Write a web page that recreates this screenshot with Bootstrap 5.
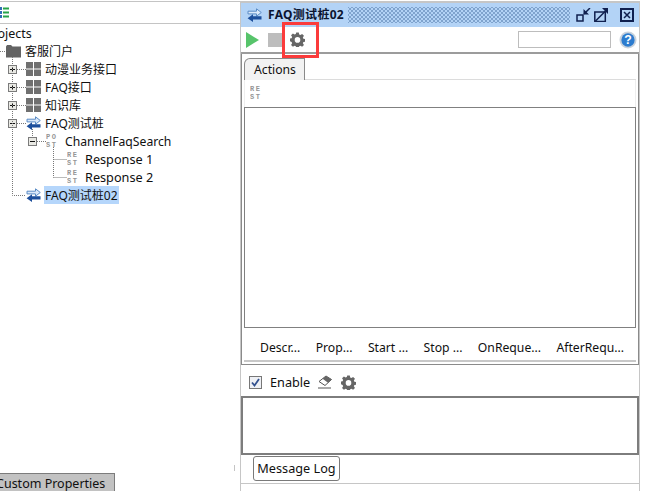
<!DOCTYPE html>
<html lang="zh">
<head>
<meta charset="utf-8">
<title>FAQ测试桩02</title>
<link href="https://cdn.jsdelivr.net/npm/bootstrap@5.3.0/dist/css/bootstrap.min.css" rel="stylesheet">
<style>
html,body{height:491px;overflow:hidden;background:#fff}
body{font-family:"Noto Sans","Noto Sans CJK SC",sans-serif;font-size:12.5px;line-height:18px;color:#101010;position:relative}
.shell{height:491px;width:654px}
.leftpane{width:240px;flex:none;height:491px;overflow:hidden;position:relative}
.lefttool{margin-top:1px;border-top:1px solid #c4c4c4;border-bottom:1px solid #c4c4c4;box-sizing:content-box;height:21px}
.projects{margin-left:-15px;height:18px;line-height:20px}
.treerow{height:18px;white-space:nowrap;font-size:12px}
.treerow>span:last-child{height:18px;line-height:20px}
.treerow.latinrow{font-size:12.7px}
.treerow.latinrow>span:last-child{line-height:18px}
.channelrow{font-size:12.2px}
.channeltext{margin-left:2px}
.lv0{padding-left:6px}.lv1{padding-left:8px}.lv2{padding-left:28px}.lv3{padding-left:67px}.lvlast{padding-left:26px}
.exp{width:9px;height:9px;flex:none;margin-right:9px}
.ico{width:15px;height:14px;flex:none;margin-right:4px}
.tinyrest{width:13px;height:16px;flex:none;margin-right:5px;font:bold 7px/7.5px "Liberation Mono",monospace;letter-spacing:1.500px;color:#969696;display:block;padding-top:1px;white-space:nowrap;overflow:hidden}
.hilite{background:#b5d6fb;padding:0 1px;margin-left:-1px}
.treelines{position:absolute;left:0;top:24px;width:240px;height:190px;pointer-events:none}
.bottomtab{height:18px;width:123px;margin-left:-8px;background:#c2c2c2;border:1px solid #7c7c7c;border-bottom:0;padding-left:3px;line-height:19px;white-space:nowrap}
.tick{width:1px;height:6px;background:#c4c4c4;margin-right:5px;margin-bottom:20px}
.rightpane{width:400px;flex:none;height:490px;border-left:1px solid #c6c6c6;border-right:1px solid #c6c6c6;border-top:2px solid #c6c6c6;margin-top:1px}
.titlebar{height:24px;background:#b3d3f6;padding:0 5px 0 6px}
.titletext{font-weight:700;font-size:12px;color:#0b1430;margin-left:6px;letter-spacing:.3px;white-space:nowrap}
.dither{flex:1;height:16px;margin:0 6px 0 4px;background-image:radial-gradient(#7fa3cd 0.8px,transparent 1px),radial-gradient(#7fa3cd 0.8px,transparent 1px);background-size:4px 4px;background-position:0 0,2px 2px}
.toolrow{border-bottom:2px solid #9c9c9c;padding:0 1px 0 5px;box-sizing:content-box;height:25px}
.stopbox{width:15px;height:14px;background:#bdbdbd;margin-left:9px;margin-right:7px;flex:none}
.searchbox{width:93px;height:17px;border:1px solid #bdbdbd;background:#fff;margin-right:8px}
.helpicon{margin-right:1px}
.tabsarea{height:311px;border:1px solid #8a8a8a;border-top:0;padding:0 2px}
.acttabs{border-bottom:1px solid #dcdcdc;height:26px;padding-top:4px}
.acttabs .nav-link{background:#f2f2f2;border:1px solid #8a8a8a;border-bottom:0;border-radius:6px 0 0 0;color:#101010;padding:0 9px;height:22px;line-height:21px;font-size:12.2px;width:61px}
.reststrip{height:27px;padding:5px 0 0 5px;border-left:1px solid #eee;border-right:1px solid #eee}
.reststrip .tinyrest{margin:0}
.bigbox{height:221px;border:1px solid #808080;background:#fff}
.evtabs{height:34px;border-bottom:2px solid #c8c8c8;padding:8px 12px 0 16px;font-size:12.2px;white-space:nowrap}
.enablerow{height:31px;padding:3px 0 0 8px;font-size:12.7px}
.fakecheck{width:13px;height:13px;border:1px solid #777;background:#eef0f5;flex:none;margin-right:8px}
.logbox{height:59px;border:2px solid #7d7d7d;background:#fff}
.logbtnrow{padding:1px 0 0 12px;border-bottom:1px solid #c6c6c6;box-sizing:content-box;height:27px}
.logbtn{font-size:12.7px;line-height:18px;padding:1px 3px 3px;border:1px solid #7a7a7a;border-radius:3px;color:#101010;background:#fff;height:25px;width:87px;white-space:nowrap;font-family:inherit}
.redmark{position:absolute;left:282px;top:22px;width:37px;height:36px;border:3px solid #fb3b3b;pointer-events:none}
</style>
</head>
<body>
<svg width="0" height="0" class="position-absolute">
  <symbol id="s-folder" viewBox="0 0 15 14"><path d="M0 2.500 1 1h4l1.500 1.500H15V13.500H0z" fill="#636363"/></symbol>
  <symbol id="s-grid" viewBox="0 0 15 14"><path d="M0 0h7v6.500H0zM8 0h7v6.500H8zM0 7.500h7V14H0zM8 7.500h7V14H8z" fill="#707070"/></symbol>
  <symbol id="s-swap" viewBox="0 0 15 14">
    <path d="M1 3.200h8.500V.8L14.300 4.500 9.500 8.200V5.900H1z" fill="#dbe9fa" stroke="#5b8cc6" stroke-width="1"/>
    <path d="M14.500 8.200H6V6.300L.6 10.200 6 14v-2.500h8.500z" fill="#1d4f9c"/>
  </symbol>
  <symbol id="s-plus" viewBox="0 0 9 9"><rect x=".5" y=".5" width="8" height="8" fill="#e9e9e4" stroke="#7b7b7b"/><path d="M2 4.500h5M4.500 2v5" stroke="#111"/></symbol>
  <symbol id="s-minus" viewBox="0 0 9 9"><rect x=".5" y=".5" width="8" height="8" fill="#e9e9e4" stroke="#7b7b7b"/><path d="M2 4.500h5" stroke="#111"/></symbol>
  <symbol id="s-gear" viewBox="0 0 16 16"><path fill="#666" fill-rule="evenodd" d="M6.600.5h2.800l.4 2.100 1.300.6 1.800-1.200 2 2-1.200 1.800.6 1.300 2.100.4v2.800l-2.100.4-.6 1.300 1.200 1.800-2 2-1.800-1.200-1.300.6-.4 2.100H6.600l-.4-2.100-1.300-.6-1.800 1.200-2-2 1.200-1.800-.6-1.300L-.400 9.800V7l2.100-.4.600-1.300L1.100 3.500l2-2 1.800 1.200 1.300-.6zM8 5.400a3 3 0 1 0 0 6 3 3 0 0 0 0-6z"/></symbol>
</svg>

<div class="shell d-flex">
  <div class="leftpane d-flex flex-column">
    <div class="lefttool d-flex align-items-center">
      <svg width="10" height="11" viewBox="0 0 10 11" class="flex-none">
        <path d="M0 0h2v3H0zM0 4h2v3H0zM0 8h2v3H0z" fill="#2f6db5"/>
        <path d="M3 .5h6v2H3zM3 4.500h6v2H3zM3 8.500h6v2H3z" fill="#27a34a"/>
      </svg>
    </div>
    <div class="projects">Projects</div>
    <ul class="list-unstyled m-0">
      <li class="treerow d-flex align-items-center lv0"><svg class="ico"><use href="#s-folder"/></svg><span>客服门户</span></li>
      <li class="treerow d-flex align-items-center lv1"><svg class="exp"><use href="#s-plus"/></svg><svg class="ico"><use href="#s-grid"/></svg><span>动漫业务接口</span></li>
      <li class="treerow d-flex align-items-center lv1"><svg class="exp"><use href="#s-plus"/></svg><svg class="ico"><use href="#s-grid"/></svg><span>FAQ接口</span></li>
      <li class="treerow d-flex align-items-center lv1"><svg class="exp"><use href="#s-plus"/></svg><svg class="ico"><use href="#s-grid"/></svg><span>知识库</span></li>
      <li class="treerow d-flex align-items-center lv1"><svg class="exp"><use href="#s-minus"/></svg><svg class="ico"><use href="#s-swap"/></svg><span>FAQ测试桩</span></li>
      <li class="treerow channelrow d-flex align-items-center lv2"><svg class="exp"><use href="#s-minus"/></svg><span class="tinyrest me-1">PO<br>ST</span><span class="channeltext">ChannelFaqSearch</span></li>
      <li class="treerow latinrow d-flex align-items-center lv3"><span class="tinyrest">RE<br>ST</span><span>Response 1</span></li>
      <li class="treerow latinrow d-flex align-items-center lv3"><span class="tinyrest">RE<br>ST</span><span>Response 2</span></li>
      <li class="treerow d-flex align-items-center lvlast"><svg class="ico"><use href="#s-swap"/></svg><span class="hilite">FAQ测试桩02</span></li>
    </ul>
    <svg class="treelines" viewBox="0 24 240 190">
      <path d="M0 51.500H6M12.500 57V195.500H26M17 69.500h9M17 87.500h9M17 105.500h9M17 123.500h9M32.500 129v8M37 141.500h9M53.500 147v30.500M53.500 159.500h13M53.500 177.500h13" fill="none" stroke="#777" stroke-dasharray="1 1"/>
    </svg>
    <div class="mt-auto d-flex justify-content-between align-items-end">
      <div class="bottomtab">Custom Properties</div>
      <div class="tick"></div>
    </div>
  </div>

  <div class="rightpane d-flex flex-column">
    <div class="titlebar d-flex align-items-center">
      <svg class="ico m-0"><use href="#s-swap"/></svg>
      <span class="titletext">FAQ测试桩02</span>
      <div class="dither"></div>
      <svg width="58" height="14" viewBox="0 0 58 14" class="flex-none">
        <g fill="none" stroke="#10204f" stroke-width="1.500">
          <rect x="1" y="7" width="6" height="6"/><path d="M8 6 14 0"/>
          <rect x="18.800" y="4" width="10.500" height="9.500"/><path d="M19 13.500 30 2.500"/>
          <rect x="45" y="1" width="12" height="12" stroke-width="2"/><path d="M48 4l6 6M54 4l-6 6"/>
        </g>
        <path d="M7.500 1v5.500H13zM26 0h6v6z" fill="#10204f"/>
      </svg>
    </div>
    <div class="toolrow d-flex align-items-center">
      <svg width="13" height="16" viewBox="0 0 13 16" class="flex-none"><path d="M0 0 13 8 0 16z" fill="#57c46b"/></svg>
      <div class="stopbox"></div>
      <svg width="15" height="15" class="flex-none me-auto"><use href="#s-gear"/></svg>
      <div class="searchbox"></div>
      <svg width="18" height="18" viewBox="0 0 19 19" class="flex-none helpicon">
        <circle cx="9.500" cy="9.500" r="9" fill="#c9d2dc"/><circle cx="9.500" cy="9.500" r="7" fill="#2c7ccf"/>
        <text x="9.500" y="14" text-anchor="middle" font-family="Liberation Sans" font-size="13" font-weight="700" fill="#fff">?</text>
      </svg>
    </div>
    <div class="tabsarea d-flex flex-column">
      <ul class="nav acttabs">
        <li class="nav-item"><a class="nav-link" href="#">Actions</a></li>
      </ul>
      <div class="reststrip"><span class="tinyrest">RE<br>ST</span></div>
      <div class="bigbox"></div>
      <div class="evtabs d-flex align-items-center justify-content-between">
        <span>Descr...</span><span>Prop...</span><span>Start ...</span><span>Stop ...</span><span>OnReque...</span><span>AfterRequ...</span>
      </div>
    </div>
    <div class="enablerow d-flex align-items-center">
      <span class="fakecheck d-flex align-items-center justify-content-center">
        <svg width="9" height="9" viewBox="0 0 9 9"><path d="M1 4.500 3.500 7.500 8 1" fill="none" stroke="#31508f" stroke-width="1.800"/></svg>
      </span>
      <span>Enable</span>
      <svg width="15" height="14" viewBox="0 0 15 14" class="flex-none ms-2"><path d="M1 6.500 8 1l5.500 3.500-6.500 6z" fill="#fff" stroke="#555"/><path d="M8 1l5.500 3.500L10 7.700 4.600 3.800z" fill="#666"/><path d="M0 13h13" stroke="#555"/></svg>
      <svg width="15" height="15" class="flex-none ms-2"><use href="#s-gear"/></svg>
    </div>
    <div class="logbox"></div>
    <div class="logbtnrow">
      <button type="button" class="btn logbtn">Message Log</button>
    </div>
  </div>
</div>
<div class="redmark"></div>
</body>
</html>
